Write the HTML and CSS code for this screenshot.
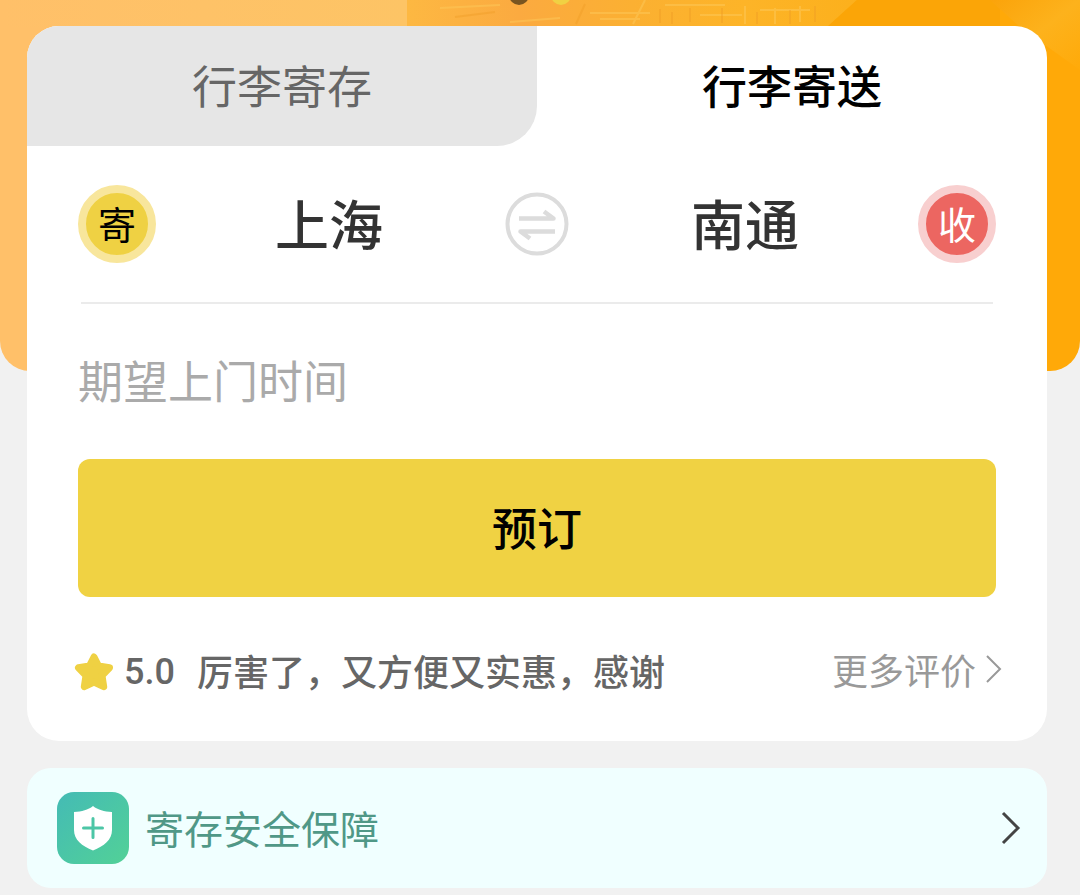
FILE: index.html
```html
<!DOCTYPE html>
<html lang="zh-CN">
<head>
  <meta charset="UTF-8" />
  <title>行李寄送</title>
  <meta name="viewport" content="width=device-width, initial-scale=1.0" />
  <link rel="stylesheet" href="styles.css">
</head>
<body>

  <div class="banner">
    <svg class="banner-art" viewBox="0 0 1080 80" preserveAspectRatio="none" aria-hidden="true">
      <defs>
        <linearGradient id="sky" x1="0" x2="1" y1="0" y2="0">
          <stop offset="0" stop-color="#ffc069" />
          <stop offset="1" stop-color="#fdc465" />
        </linearGradient>
        <linearGradient id="haze" x1="0" x2="1" y1="0" y2="0">
          <stop offset="0" stop-color="#fdb842" />
          <stop offset="0.25" stop-color="#fbaa40" />
          <stop offset="0.5" stop-color="#fbb032" />
          <stop offset="0.75" stop-color="#fdb428" />
          <stop offset="1" stop-color="#fcb01c" />
        </linearGradient>
        <linearGradient id="glow" x1="0" x2="1" y1="0" y2="1">
          <stop offset="0" stop-color="#fba30a" />
          <stop offset="0.5" stop-color="#fdb21c" />
          <stop offset="1" stop-color="#ffaa09" />
        </linearGradient>
      </defs>
      <path d="M0 0h407v27H0z" fill="url(#sky)" />
      <path d="M407 0h450l-30 27H407z" fill="url(#haze)" />
      <path d="M857 0h143v27H827z" fill="#fba507" />
      <path d="M990 0h90v70L1020 27z" fill="url(#glow)" />
      <g stroke="#fdc95a" stroke-width="2" opacity="0.5">
        <path d="M440 8l60-3M510 22l50-4M590 13h60M600 19h40M665 5h60M700 15h42M760 10h50M645 0l-12 24M745 6v18M775 8v16M800 6v16" />
      </g>
      <g stroke="#ef9c25" stroke-width="2" opacity="0.4">
        <path d="M455 17l40-5M585 4l-9 20M660 9v14M672 12v12M690 8v14M722 8v15M757 12v12M790 10v14M815 6v16" />
      </g>
    </svg>
    <div class="dots">
      <span class="dot"></span>
      <span class="dot dot-active"></span>
    </div>
  </div>

  <main>
    <section class="card">
      <div class="tabs">
        <button type="button" class="tab tab-off">行李寄存</button>
        <button type="button" class="tab tab-on">行李寄送</button>
      </div>

      <form class="order">
        <div class="route">
          <span class="mark mark-send">寄</span>
          <button type="button" class="city">上海</button>
          <button type="button" class="swap" aria-label="交换城市">
            <svg viewBox="0 0 64 64" fill="none" stroke="#dcdcdc">
              <circle cx="32" cy="32" r="29.5" stroke-width="4" />
              <path d="M14 26.500h34.500L39 19.500M50 39.500H15.500L25 46.500" stroke-width="4.500" stroke-linejoin="round" />
            </svg>
          </button>
          <button type="button" class="city">南通</button>
          <span class="mark mark-receive">收</span>
        </div>
        <hr>

        <input class="time" type="text" placeholder="期望上门时间" aria-label="期望上门时间">
        <button type="button" class="book">预订</button>

        <div class="review">
          <svg class="star" viewBox="0 0 40 40" aria-hidden="true">
            <path d="M20 5l4.600 9 10.900 1.800-7.500 7.700 1.700 11.200L20 30l-9.700 4.700L12 23.500l-7.500-7.700L15.400 14z" fill="#efd143" stroke="#efd143" stroke-width="7" stroke-linejoin="round" />
          </svg>
          <span class="score">5.0</span>
          <span class="comment">厉害了，又方便又实惠，感谢</span>
          <a class="more" href="#">更多评价
            <svg viewBox="0 0 16 28" fill="none" stroke="#999" stroke-width="2"><path d="M1 1l13 13L1 27" /></svg>
          </a>
        </div>
      </form>
    </section>

    <a class="safety" href="#">
      <svg class="shield" viewBox="0 0 72 72" aria-hidden="true">
        <defs>
          <linearGradient id="green" x1="0" y1="0" x2="1" y2="1">
            <stop offset="0" stop-color="#44bbb5" />
            <stop offset="1" stop-color="#52d197" />
          </linearGradient>
        </defs>
        <rect width="72" height="72" rx="17" fill="url(#green)" />
        <path d="M36 14c5 4 11 5.500 19 6v18c0 10-8 16-19 20.500C25 54 17 48 17 38V20c8-.5 14-2 19-6z" fill="#fff" />
        <path d="M36 26.500v19M26.500 36h19" stroke="#4cc6a6" stroke-width="3" stroke-linecap="round" />
      </svg>
      <span class="safety-text">寄存安全保障</span>
      <svg class="arrow" viewBox="0 0 20 34" fill="none" stroke="#444" stroke-width="3"><path d="M2 2l15 15L2 32" /></svg>
    </a>
  </main>

</body>
</html>
```
FILE: styles.css
```css
html, body {
  margin: 0;
  padding: 0;
  background: #f1f1f1;
  font-family: "Noto Sans CJK SC", sans-serif;
  color: #333;
}

button, input {
  box-sizing: border-box;
  font-family: inherit;
  color: inherit;
  background: none;
  border: none;
  padding: 0 0 4px;
  margin: 0;
}

button {
  cursor: pointer;
}

a {
  text-decoration: none;
}

svg {
  display: block;
}

/* picture behind the card */
.banner {
  position: absolute;
  top: 0;
  left: 0;
  width: 100%;
  height: 371px;
  overflow: hidden;
  border-radius: 0 0 30px 30px;
  background: linear-gradient(to right, #ffc069 30%, #ffa908 80%);
}

.banner-art {
  width: 100%;
  height: 80px;
}

.dots {
  position: absolute;
  top: -15px;
  left: 0;
  right: 0;
  display: flex;
  justify-content: center;
  gap: 22px;
}

.dot {
  width: 20px;
  height: 20px;
  border-radius: 50%;
  background: #785420;
}

.dot-active {
  background: #f0d143;
}

main {
  position: relative;
  padding: 26px 33px 7px 27px;
}

.card {
  background: #fff;
  border-radius: 32px;
  overflow: hidden;
}

.tabs {
  display: flex;
}

.tab {
  flex: 1;
  height: 120px;
  font-size: 45px;
}

.tab-off {
  color: #666;
  background: #e6e6e6;
  border-radius: 0 0 40px 0;
}

.tab-on {
  color: #000;
  font-weight: 500;
}

.order {
  padding: 0 51px 14px;
}

.route {
  display: grid;
  grid-template-columns: 78px 1fr 70px 1fr 78px;
  align-items: center;
  height: 156px;
}

.mark {
  box-sizing: border-box;
  width: 78px;
  height: 78px;
  border: 8px solid;
  border-radius: 50%;
  font-size: 38px;
  line-height: 60px;
  text-align: center;
}

.mark-send {
  color: #000;
  background: #efd143;
  border-color: #f8e69c;
}

.mark-receive {
  color: #fff;
  background: #ec6661;
  border-color: #f8cfcf;
}

.city {
  font-size: 54px;
  font-weight: 500;
}

.swap {
  width: 64px;
  padding: 0;
  justify-self: center;
}

hr {
  height: 2px;
  margin: 0 3px;
  border: none;
  background: #ebebeb;
}

.time {
  display: block;
  width: 100%;
  height: 155px;
  font-size: 45px;
}

.time::placeholder {
  color: #aaa;
  opacity: 1;
}

.book {
  display: block;
  width: 100%;
  height: 138px;
  border-radius: 12px;
  background: #f0d243;
  color: #000;
  font-size: 45px;
  font-weight: 500;
}

.review {
  display: flex;
  align-items: center;
  height: 110px;
  margin: 20px -6px 0 -4px;
  font-size: 36px;
  color: #666;
}

.star {
  width: 40px;
  height: 40px;
}

.score {
  margin: 0 22px 0 10px;
  font-family: Roboto, sans-serif;
  font-weight: 500;
}

.comment {
  padding-bottom: 4px;
  font-weight: 500;
}

.more {
  display: flex;
  align-items: center;
  gap: 10px;
  margin-left: auto;
  padding-bottom: 6px;
  color: #999;
}

.more svg {
  width: 16px;
  height: 28px;
}

.safety {
  display: flex;
  align-items: center;
  height: 120px;
  margin-top: 27px;
  padding: 0 26px 0 30px;
  border-radius: 24px;
  background: #f0ffff;
  color: #509887;
  font-size: 39px;
}

.safety-text {
  padding-bottom: 2px;
}

.shield {
  width: 72px;
  height: 72px;
  margin-right: 16px;
}

.arrow {
  width: 20px;
  height: 34px;
  margin-left: auto;
}
```
